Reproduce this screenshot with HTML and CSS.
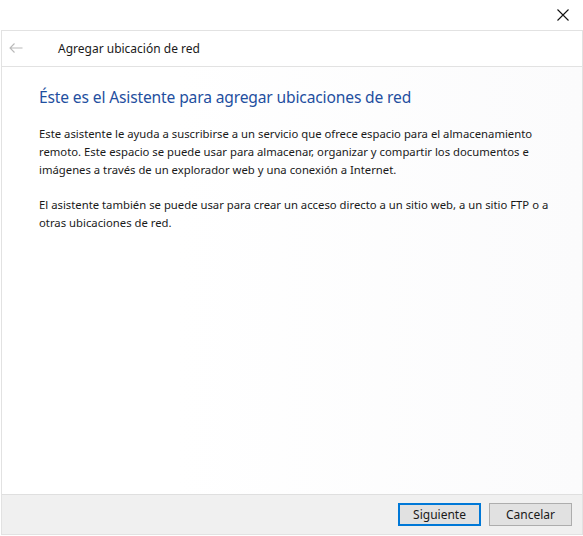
FILE: index.html
```html
<!DOCTYPE html>
<html lang="es">
<head>
    <meta charset="UTF-8">
    <title>Agregar ubicación de red</title>
    <link rel="stylesheet" href="styles.css">
</head>
<body>
    <div class="titlebar">
        <button class="close-btn" aria-label="Cerrar">
            <svg width="12" height="12" viewBox="0 0 12 12">
                <path d="M0.5 0.5 L11.5 11.5 M11.5 0.5 L0.5 11.5" stroke="#111" stroke-width="1.1" fill="none"/>
            </svg>
        </button>
    </div>

    <div class="wizard">
        <div class="wizard-header">
            <span class="back-arrow">
                <svg width="14" height="10" viewBox="0 0 14 10">
                    <path d="M13.5 5 H1 M5.5 0.5 L1 5 L5.5 9.5" stroke="#b9b9b9" stroke-width="1.1" fill="none"/>
                </svg>
            </span>
            <span class="wizard-title">Agregar ubicación de red</span>
        </div>

        <div class="wizard-content">
            <h1>Éste es el Asistente para agregar ubicaciones de red</h1>
            <p>Este asistente le ayuda a suscribirse a un servicio que ofrece espacio para el almacenamiento remoto. Este espacio se puede usar para almacenar, organizar y compartir los documentos e imágenes a través de un explorador web y una conexión a Internet.</p>
            <p>El asistente también se puede usar para crear un acceso directo a un sitio web, a un sitio FTP o a otras ubicaciones de red.</p>
        </div>

        <div class="wizard-footer">
            <button class="btn btn-default">Siguiente</button>
            <button class="btn">Cancelar</button>
        </div>
    </div>
</body>
</html>
```

FILE: styles.css
```css
body {
    margin: 0;
    background-color: #ffffff;
    font-family: "Noto Sans", "Open Sans", sans-serif;
    color: #1a1a1a;
}

.titlebar {
    height: 30px;
    display: flex;
    justify-content: flex-end;
    align-items: center;
}

.close-btn {
    width: 46px;
    height: 30px;
    display: flex;
    justify-content: center;
    align-items: center;
    padding: 0;
    margin-right: -3px;
    border: none;
    background: none;
}

.wizard {
    margin-left: 1px;
    height: 505px;
    box-sizing: border-box;
    border: 1px solid #e2e2e2;
    display: flex;
    flex-direction: column;
}

.wizard-header {
    height: 35px;
    border-bottom: 1px solid #e2e2e2;
    display: flex;
    align-items: center;
}

.back-arrow {
    width: 56px;
    padding-left: 7px;
    box-sizing: border-box;
    display: flex;
    align-items: center;
    margin-top: -2px;
}

.wizard-title {
    font-size: 12px;
    color: #1a1a1a;
    margin-top: -1px;
}

.wizard-content {
    flex: 1;
    padding: 18px 18px 0 37px;
    background: linear-gradient(to right, #ffffff 30%, #fbfbfc);
}

.wizard-content h1 {
    margin: 0 0 16px;
    font-size: 15.6px;
    letter-spacing: -0.15px;
    font-weight: normal;
    color: #1f4fa0;
    line-height: 24px;
}

.wizard-content p {
    margin: 0 0 17px;
    font-size: 11.3px;
    line-height: 18px;
}

.wizard-footer {
    height: 39px;
    border-top: 1px solid #dfdfdf;
    background-color: #f0f0f0;
    display: flex;
    justify-content: flex-end;
    align-items: center;
    gap: 8px;
    padding-right: 10px;
}

.btn {
    width: 83px;
    height: 23px;
    font-family: inherit;
    font-size: 12px;
    color: #1a1a1a;
    background-color: #e1e1e1;
    border: 1px solid #adadad;
    padding: 0;
}

.btn-default {
    border: 2px solid #0078d7;
}
```
